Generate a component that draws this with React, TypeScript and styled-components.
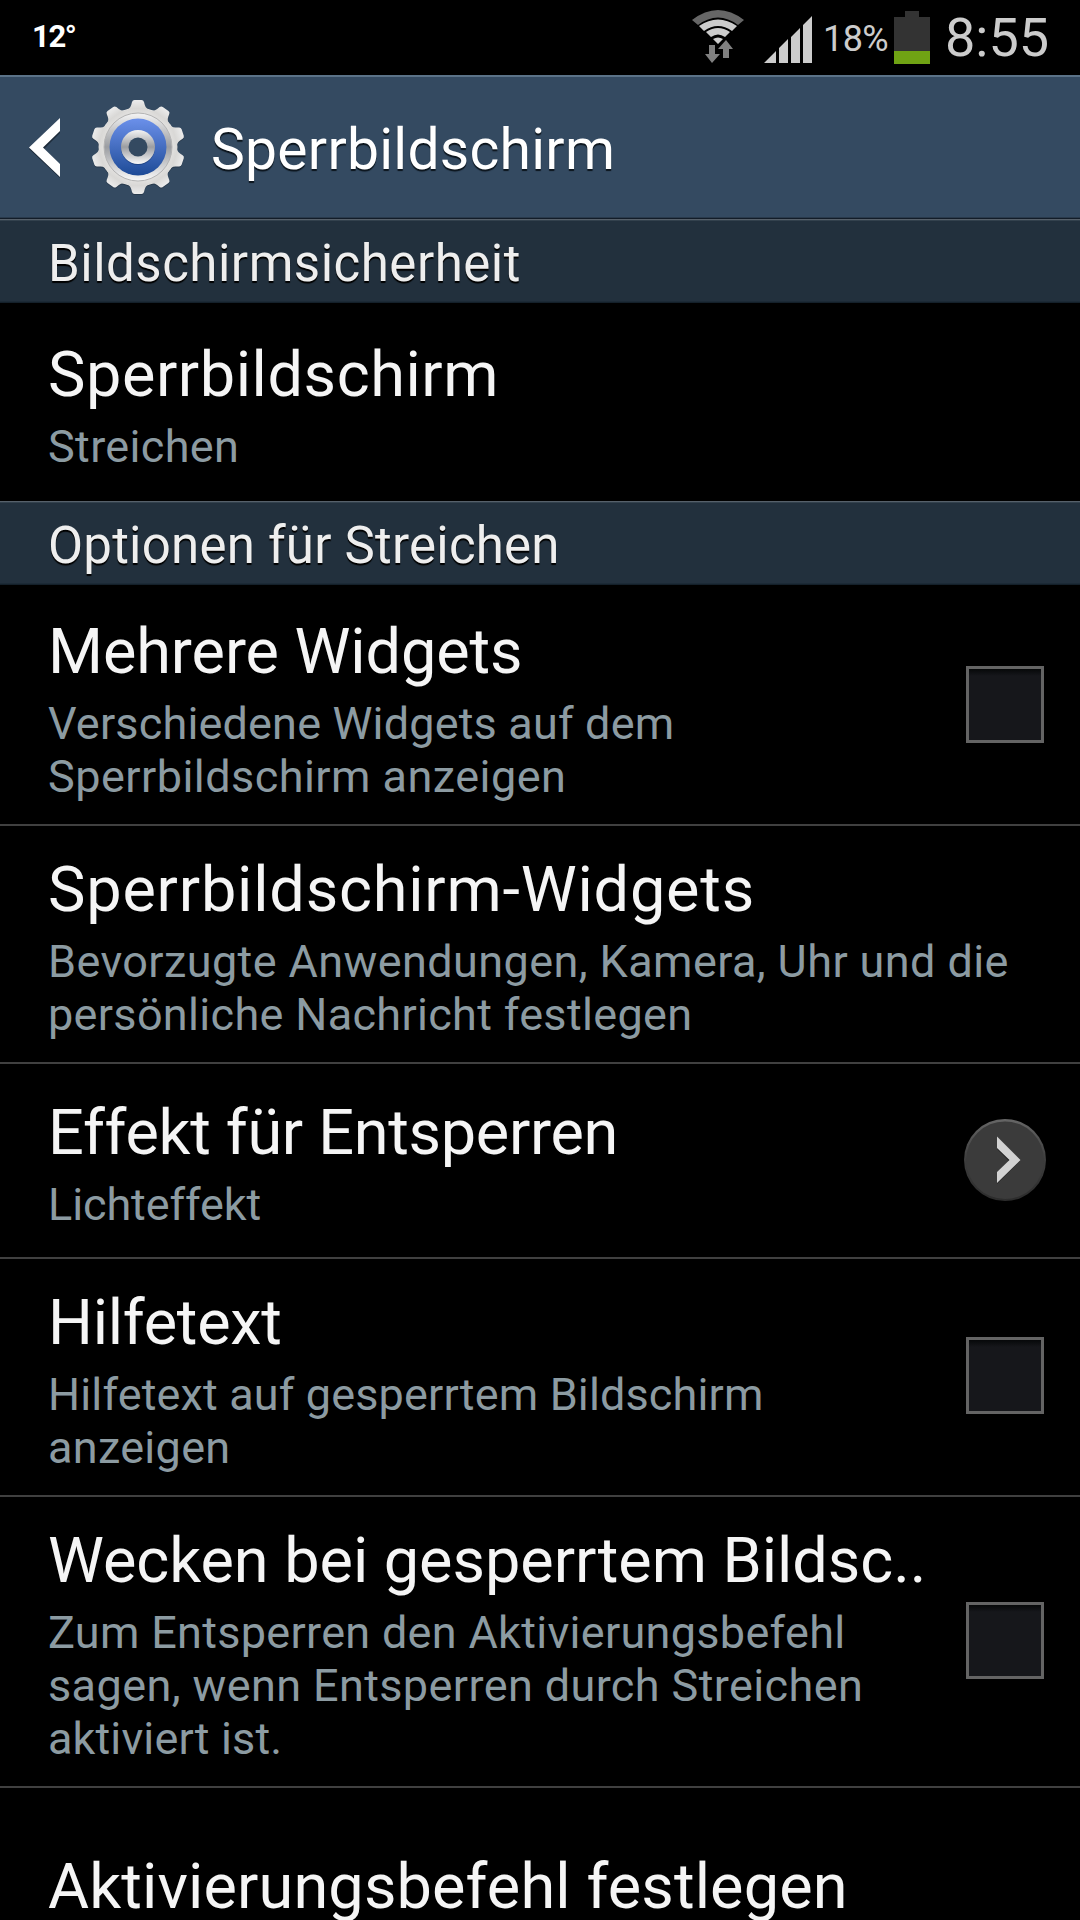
import React from "react";
import styled, { createGlobalStyle } from "styled-components";

const GlobalStyle = createGlobalStyle`
  * { box-sizing: border-box; }
  body { margin: 0; background: #000; font-family: Roboto, "Liberation Sans", sans-serif; }
`;

const Screen = styled.main`
  width: 1080px;
  height: 1920px;
  overflow: hidden;
  background: #000;
  display: flex;
  flex-direction: column;
`;

const StatusBar = styled.header`
  flex: none;
  height: 75px;
  display: flex;
  align-items: center;
  color: #ccc;
`;

const Temperature = styled.span`
  flex: 1;
  padding: 0 0 2px 32px;
  color: #fff;
  font-size: 31px;
  font-weight: 700;
  letter-spacing: -1.4px;
`;

const WifiIcon = styled.svg`
  width: 54px;
  height: 75px;
  margin-right: 19px;
`;

const SignalIcon = styled.svg`
  width: 48px;
  height: 75px;
  margin-right: 11px;
`;

const BatteryLevel = styled.span`
  width: 71px;
  font-size: 36px;
  line-height: 75px;
  padding-top: 3px;
  letter-spacing: -0.6px;
`;

const BatteryIcon = styled.svg`
  width: 36px;
  height: 75px;
  margin-right: 15px;
`;

const Clock = styled.span`
  width: 135px;
  font-size: 54px;
  line-height: 75px;
`;

const ActionBar = styled.nav`
  flex: none;
  height: 144px;
  display: flex;
  align-items: center;
  background: #344a61;
  border-top: 2px solid #5b7388;
  border-bottom: 1px solid #121c28;
  box-shadow: inset 0 -1px #293a4c;
  padding-left: 27px;
`;

const BackIcon = styled.svg`
  width: 36px;
  height: 66px;
`;

const GearIcon = styled.svg`
  width: 100px;
  height: 100px;
  margin: 0 0 2px 25px;
`;

const BarTitle = styled.h1`
  margin: 3px 0 0 23px;
  color: #fff;
  font-size: 57px;
  font-weight: 400;
  letter-spacing: 0.25px;
  text-shadow: 0 2px 1px #0b141c;
`;

const SectionHeader = styled.h2<{ $spacing: number }>`
  flex: none;
  height: 84px;
  margin: 0;
  padding-left: 48px;
  border-top: 1px solid #56606a;
  border-bottom: 1px solid #14202a;
  box-shadow: inset 0 1px #33414d, inset 0 -1px #1c2a36;
  background: #22303d;
  color: #eee;
  font-size: 51px;
  font-weight: 400;
  line-height: 87px;
  letter-spacing: ${(p) => p.$spacing}px;
  text-shadow: 0 2px 1px #000;
`;

const Row = styled.section<{ $height: number; $divider?: boolean }>`
  flex: none;
  height: ${(p) => p.$height}px;
  display: flex;
  align-items: center;
  padding: 0 36px 0 48px;
  border-bottom: ${(p) => (p.$divider ? "2px solid #404040" : "none")};
`;

const Texts = styled.div<{ $top: number }>`
  flex: 1;
  align-self: flex-start;
  padding-top: ${(p) => p.$top}px;
  white-space: nowrap;
`;

const Title = styled.div<{ $spacing: number }>`
  margin-bottom: 8px;
  color: #f5f5f5;
  font-size: 63px;
  line-height: 74px;
  letter-spacing: ${(p) => p.$spacing}px;
`;

const Summary = styled.div<{ $spacing: number }>`
  color: #8c9ba2;
  font-size: 45px;
  line-height: 53px;
  letter-spacing: ${(p) => p.$spacing}px;
`;

const Checkbox = styled.span<{ $lift: number }>`
  flex: none;
  width: 78px;
  height: 77px;
  margin-bottom: ${(p) => p.$lift}px;
  border: 3px solid #646464;
  background: linear-gradient(#060809, #16171b 7px);
`;

const MoreIcon = styled.svg`
  flex: none;
  width: 84px;
  height: 84px;
  margin: 0 -3px 2px 0;
`;

type Line = [text: string, spacing: number];
type Item = {
  title: Line;
  lines: Line[];
  height: number;
  top: number;
  control?: "check" | "more";
  lift?: number;
};

const lockScreen: Item = {
  title: ["Sperrbildschirm", 0.57],
  lines: [["Streichen", 0.35]],
  height: 198,
  top: 35,
};

const options: Item[] = [
  {
    title: ["Mehrere Widgets", -0.08],
    lines: [["Verschiedene Widgets auf dem", 0.17], ["Sperrbildschirm anzeigen", 0.46]],
    height: 241,
    top: 30,
    control: "check",
  },
  {
    title: ["Sperrbildschirm-Widgets", 0.8],
    lines: [["Bevorzugte Anwendungen, Kamera, Uhr und die", 0.4], ["persönliche Nachricht festlegen", 0.32]],
    height: 238,
    top: 27,
  },
  { title: ["Effekt für Entsperren", -0.3], lines: [["Lichteffekt", -0.1]], height: 195, top: 32, control: "more" },
  {
    title: ["Hilfetext", -0.27],
    lines: [["Hilfetext auf gesperrtem Bildschirm", 0.14], ["anzeigen", 0.3]],
    height: 238,
    top: 27,
    control: "check",
    lift: 3,
  },
  {
    title: ["Wecken bei gesperrtem Bildsc..", -0.04],
    lines: [
      ["Zum Entsperren den Aktivierungsbefehl", 0.3],
      ["sagen, wenn Entsperren durch Streichen", 0.39],
      ["aktiviert ist.", 0.12],
    ],
    height: 291,
    top: 27,
    control: "check",
    lift: 2,
  },
  { title: ["Aktivierungsbefehl festlegen", 0.13], lines: [], height: 200, top: 62 },
];

function MoreButton() {
  return (
    <MoreIcon viewBox="0 0 84 84">
      <defs>
        <linearGradient id="rim" x1="0" y1="0" x2="0" y2="1">
          <stop offset="0" stopColor="#666" />
          <stop offset="0.5" stopColor="#3d3d3d" />
          <stop offset="1" stopColor="#2c2c2c" />
        </linearGradient>
      </defs>
      <circle cx="42" cy="42" r="41" fill="url(#rim)" />
      <circle cx="42" cy="42.200" r="38.800" fill="#3b3b3b" />
      <path d="M34 20L57 43L34 66V55L46 43L34 31Z" fill="#222" />
      <path d="M34 18.500L57.500 42L34 65V54L46.500 42L34 30Z" fill="#d2d2d2" />
    </MoreIcon>
  );
}

const teeth = Array.from({ length: 10 }, (_, i) => i * 36);
const toothPath = "M36 14Q42 12.500 43.200 8L44 5Q44.600 3 46.500 3H53.500Q55.400 3 56 5L56.800 8Q58 12.500 64 14L58 20H42Z";

function GearShape({ fill, opacity, dy = 0 }: { fill: string; opacity?: number; dy?: number }) {
  return (
    <g fill={fill} opacity={opacity} transform={`translate(0 ${dy})`}>
      <circle cx="50" cy="50" r="39.500" />
      {teeth.map((a) => (
        <path key={a} transform={`rotate(${a} 50 50)`} d={toothPath} />
      ))}
    </g>
  );
}

function Gear() {
  return (
    <GearIcon viewBox="0 0 100 100">
      <defs>
        <linearGradient id="body" x1="0" y1="0" x2="0" y2="1">
          <stop offset="0" stopColor="#ececec" />
          <stop offset="0.5" stopColor="#d9d8d6" />
          <stop offset="1" stopColor="#e6e5e3" />
        </linearGradient>
        <linearGradient id="metal" x1="0" y1="0" x2="0" y2="1">
          <stop offset="0" stopColor="#f4f4f4" />
          <stop offset="0.5" stopColor="#9b9da1" />
          <stop offset="1" stopColor="#fafafa" />
        </linearGradient>
        <linearGradient id="blue" x1="0" y1="0" x2="0" y2="1">
          <stop offset="0" stopColor="#6b90ea" />
          <stop offset="1" stopColor="#1e4b97" />
        </linearGradient>
        <mask id="hole">
          <rect width="100" height="100" fill="#fff" />
          <circle cx="50" cy="50" r="9.500" fill="#000" />
        </mask>
      </defs>
      <g mask="url(#hole)">
        <GearShape fill="#1d2a38" opacity={0.5} dy={1} />
        <GearShape fill="url(#body)" />
        <circle cx="50" cy="50" r="34" fill="url(#metal)" stroke="#b4b4b4" strokeWidth="1" />
        <circle cx="50" cy="50" r="28.500" fill="url(#blue)" />
        <circle cx="50" cy="51" r="17" fill="#17386f" opacity="0.6" />
        <circle cx="50" cy="50" r="17" fill="url(#metal)" />
      </g>
    </GearIcon>
  );
}

function SettingRow({ item, divider }: { item: Item; divider?: boolean }) {
  return (
    <Row $height={item.height} $divider={divider}>
      <Texts $top={item.top}>
        <Title $spacing={item.title[1]}>{item.title[0]}</Title>
        {item.lines.map(([text, spacing]) => (
          <Summary key={text} $spacing={spacing}>{text}</Summary>
        ))}
      </Texts>
      {item.control === "check" && <Checkbox $lift={item.lift ?? 0} />}
      {item.control === "more" && <MoreButton />}
    </Row>
  );
}

export default function App() {
  return (
    <Screen>
      <GlobalStyle />
      <StatusBar>
        <Temperature>12°</Temperature>
        <WifiIcon viewBox="0 0 54 75">
          <path d="M1 20Q27 0 53 20L47 25Q27 10 7 25Z" fill="#666" />
          <path d="M8 26Q27 13 46 26L41 31Q27 21 13 31ZM15 32Q27 24 39 32L34 37Q27 32 20 37ZM22 39Q27 36 32 39L27 44Z" fill="#ccc" />
          <path d="M18 45H24V54H29L21 63L14 54H18ZM35 40L42 49H38V58H32V49H27Z" fill="#808080" />
        </WifiIcon>
        <SignalIcon viewBox="0 0 48 75">
          <path d="M0 63L12 51V63ZM15 48L24 39V63H15ZM27 37L36 28V63H27ZM39 25L48 16V63H39Z" fill="#ccc" />
        </SignalIcon>
        <BatteryLevel>18%</BatteryLevel>
        <BatteryIcon viewBox="0 0 36 75">
          <path d="M11 11H25V17H36V51H0V17H11Z" fill="#333" />
          <path d="M0 51H36V64H0Z" fill="#70a314" />
        </BatteryIcon>
        <Clock>8:55</Clock>
      </StatusBar>
      <ActionBar>
        <BackIcon viewBox="0 0 36 66">
          <path d="M33 5V18L17 34L33 50V63L2 34Z" fill="#1d2b3a" />
          <path d="M33 3V16L16 32.500L33 49V62L2 32.500Z" fill="#fff" />
        </BackIcon>
        <Gear />
        <BarTitle>Sperrbildschirm</BarTitle>
      </ActionBar>
      <SectionHeader $spacing={0.5}>Bildschirmsicherheit</SectionHeader>
      <SettingRow item={lockScreen} />
      <SectionHeader $spacing={0.22}>Optionen für Streichen</SectionHeader>
      {options.map((item) => (
        <SettingRow key={item.title[0]} item={item} divider />
      ))}
    </Screen>
  );
}
